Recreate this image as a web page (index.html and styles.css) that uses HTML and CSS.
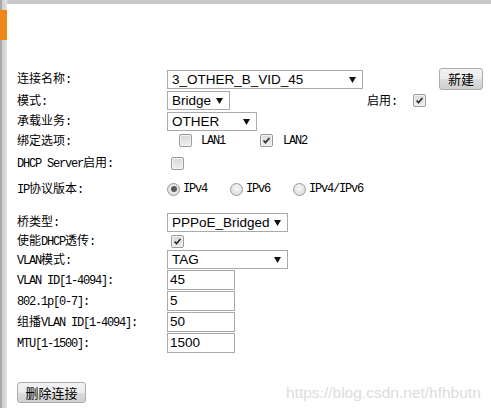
FILE: index.html
```html
<!DOCTYPE html>
<html lang="zh">
<head>
<meta charset="utf-8">
<title>WAN</title>
<link rel="stylesheet" href="styles.css">
</head>
<body>
<div class="frame">
  <div class="tab"></div>
  <div class="content">
    <div class="form">
      <div class="row r1">
        <span class="lbl">连接名称<span class="m">:</span></span>
        <div class="sel w-name">3_OTHER_B_VID_45<svg class="arr" viewBox="0 0 7 6"><path d="M0 0H7L3.5 6Z"/></svg></div>
        <span></span>
        <button class="btn btn-new">新建</button>
      </div>
      <div class="row r2">
        <span class="lbl">模式<span class="m">:</span></span>
        <div class="sel w-mode">Bridge<svg class="arr" viewBox="0 0 7 6"><path d="M0 0H7L3.5 6Z"/></svg></div>
        <span class="lbl">启用<span class="m">:</span></span>
        <span class="cb on"><svg viewBox="0 0 13 13"><path d="M3 6.5L5.3 9L10 3.5" /></svg></span>
      </div>
      <div class="row r3">
        <span class="lbl">承载业务<span class="m">:</span></span>
        <div class="sel w-svc">OTHER<svg class="arr" viewBox="0 0 7 6"><path d="M0 0H7L3.5 6Z"/></svg></div>
      </div>
      <div class="row r4">
        <span class="lbl">绑定选项<span class="m">:</span></span>
        <div class="ctl bind">
          <span class="cb"></span><span class="m opt1">LAN1</span>
          <span class="cb on"><svg viewBox="0 0 13 13"><path d="M3 6.5L5.3 9L10 3.5" /></svg></span><span class="m opt2">LAN2</span>
        </div>
      </div>
      <div class="row r5">
        <span class="lbl"><span class="m">DHCP Server</span>启用<span class="m">:</span></span>
        <div class="ctl pad4"><span class="cb"></span></div>
      </div>
      <div class="row r6">
        <span class="lbl"><span class="m">IP</span>协议版本<span class="m">:</span></span>
        <div class="ctl radios">
          <span class="ritem"><span class="rd on"></span><span class="m">IPv4</span></span>
          <span class="ritem"><span class="rd"></span><span class="m">IPv6</span></span>
          <span class="ritem"><span class="rd"></span><span class="m">IPv4/IPv6</span></span>
        </div>
      </div>
      <div class="row r7">
        <span class="lbl">桥类型<span class="m">:</span></span>
        <div class="sel w-br">PPPoE_Bridged<svg class="arr" viewBox="0 0 7 6"><path d="M0 0H7L3.5 6Z"/></svg></div>
      </div>
      <div class="row r8">
        <span class="lbl">使能<span class="m">DHCP</span>透传<span class="m">:</span></span>
        <div class="ctl pad4"><span class="cb on"><svg viewBox="0 0 13 13"><path d="M3 6.5L5.3 9L10 3.5" /></svg></span></div>
      </div>
      <div class="row r9">
        <span class="lbl"><span class="m">VLAN</span>模式<span class="m">:</span></span>
        <div class="sel w-br">TAG<svg class="arr" viewBox="0 0 7 6"><path d="M0 0H7L3.5 6Z"/></svg></div>
      </div>
      <div class="row rin">
        <span class="lbl"><span class="m">VLAN ID[1-4094]:</span></span>
        <input class="txt" type="text" value="45">
      </div>
      <div class="row rin">
        <span class="lbl"><span class="m">802.1p[0-7]:</span></span>
        <input class="txt" type="text" value="5">
      </div>
      <div class="row rin">
        <span class="lbl">组播<span class="m">VLAN ID[1-4094]:</span></span>
        <input class="txt" type="text" value="50">
      </div>
      <div class="row rin">
        <span class="lbl"><span class="m">MTU[1-1500]:</span></span>
        <input class="txt" type="text" value="1500">
      </div>
      <div class="actions">
        <button class="btn btn-del">删除连接</button>
      </div>
    </div>
    <div class="watermark">https://blog.csdn.net/hfhbutn</div>
  </div>
</div>
</body>
</html>
```

FILE: styles.css
```css
* { box-sizing: border-box; }
html, body {
  margin: 0;
  padding: 0;
  width: 491px;
  height: 408px;
  overflow: hidden;
  background: #ffffff;
}
.frame {
  position: relative;
  width: 491px;
  height: 408px;
  border-top: 4px solid #c9c9c9;
  background: #fff;
  font-family: "Noto Sans CJK SC", sans-serif;
  font-size: 12px;
  color: #000;
}
.frame::before {
  content: "";
  position: absolute;
  left: 0;
  top: -4px;
  width: 7px;
  height: 412px;
  background: linear-gradient(to right, #a8a8a8 0, #a8a8a8 2px, #cfcfcf 2px, #d8d8d8 5px, #e8e8e8 7px);
}
.tab {
  position: absolute;
  left: 0;
  top: 6px;
  width: 7px;
  height: 30px;
  background: #f0861a;
}
.content {
  position: relative;
  height: 100%;
  padding: 64px 0 0 17px;
}
.form {
  display: flex;
  flex-direction: column;
}
.row {
  display: grid;
  grid-template-columns: 150px 200px 46px 1fr;
  align-items: center;
  height: 20px;
}
.r1 { height: 22px; }
.r2 { height: 21px; }
.r3 { height: 20px; }
.r4 { height: 19px; }
.r5 { margin-top: 3px; height: 20px; }
.r6 { margin-top: 6px; height: 20px; }
.r7 { margin-top: 13px; height: 20px; }
.r8 { height: 18px; }
.r9 { height: 19px; }
.rin { height: 21px; }
.lbl {
  white-space: nowrap;
  line-height: 14px;
}
.m {
  font-family: "Liberation Mono", monospace;
  font-size: 12px;
  letter-spacing: -1.2px;
}
.sel {
  position: relative;
  height: 19px;
  border: 1px solid #a9a9a9;
  background: #fff;
  font-family: "Liberation Sans", Arial, sans-serif;
  font-size: 13.5px;
  line-height: 17px;
  padding-left: 4px;
  white-space: nowrap;
}
.sel .arr {
  position: absolute;
  right: 6px;
  top: 6px;
  width: 7px;
  height: 6px;
  fill: #111;
}
.w-name { width: 196px; }
.w-mode { width: 63px; }
.w-svc { width: 90px; }
.w-br { width: 121px; }
.btn {
  font-family: "Noto Sans CJK SC", sans-serif;
  font-size: 13px;
  color: #000;
  border: 1px solid #acacac;
  border-radius: 3px;
  background: linear-gradient(#f2f2f2, #ebebeb 50%, #dddddd 51%, #cfcfcf);
  padding: 0;
  line-height: 18px;
}
.btn-new {
  width: 44px;
  height: 22px;
  margin-left: 26px;
  justify-self: start;
}
.btn-del {
  width: 69px;
  height: 21px;
}
.actions {
  margin-top: 29px;
  display: flex;
}
.ctl {
  display: flex;
  align-items: center;
  height: 100%;
}
.pad4 { padding-left: 4px; }
.cb {
  display: inline-block;
  width: 13px;
  height: 13px;
  border: 1px solid #999;
  border-radius: 2px;
  background: linear-gradient(#d8d8d8, #eeeeee);
  box-shadow: inset 0 0 0 1px #f4f4f4;
}
.cb svg {
  display: block;
  width: 11px;
  height: 11px;
  fill: none;
  stroke: #333;
  stroke-width: 2;
}
.r2 .cb { justify-self: start; }
.bind { padding-left: 12px; }
.bind .opt1 { margin-left: 9px; margin-right: 35px; }
.bind .opt2 { margin-left: 10px; }
.radios { gap: 23px; }
.ritem {
  display: inline-flex;
  align-items: center;
}
.ritem .m { margin-left: 3px; }
.rd {
  display: inline-block;
  width: 13px;
  height: 13px;
  border: 1px solid #9a9a9a;
  border-radius: 50%;
  background: radial-gradient(circle at 50% 40%, #f6f6f6, #d6d6d6);
  position: relative;
}
.rd.on::after {
  content: "";
  position: absolute;
  left: 2.5px;
  top: 2.5px;
  width: 6px;
  height: 6px;
  border-radius: 50%;
  background: #5a5a5a;
}
.txt {
  width: 68px;
  height: 20px;
  border: 1px solid #a9a9a9;
  padding: 0 2px;
  margin: 0;
  font-family: "Liberation Sans", Arial, sans-serif;
  font-size: 13.5px;
  color: #000;
  outline: none;
}
.watermark {
  position: absolute;
  left: 286px;
  top: 380px;
  font-family: "Liberation Sans", Arial, sans-serif;
  font-size: 15.5px;
  color: #dcdcdc;
  white-space: nowrap;
}
```
